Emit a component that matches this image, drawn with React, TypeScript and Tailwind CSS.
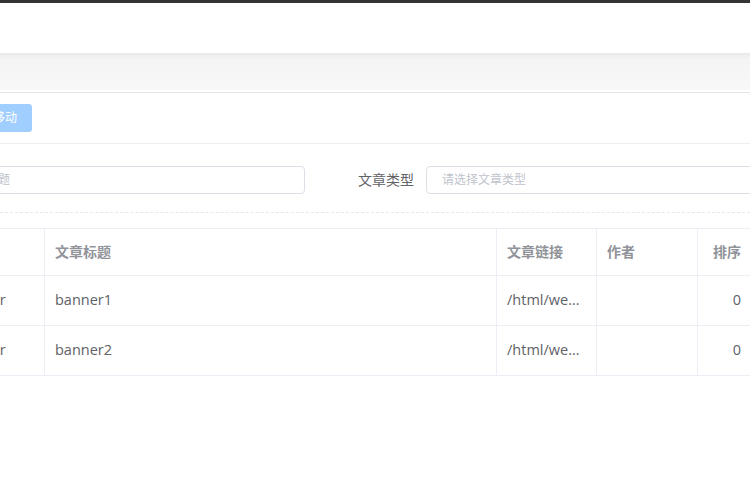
const font = { fontFamily: '"Open Sans", "Noto Sans CJK SC", sans-serif' };

const columns = [
  { label: '类型', align: 'left' },
  { label: '文章标题', align: 'left' },
  { label: '文章链接', align: 'left' },
  { label: '作者', align: 'left' },
  { label: '排序', align: 'right' },
];

const rows = [
  ['banner', 'banner1', '/html/webpage/banner1.html', '', '0'],
  ['banner', 'banner2', '/html/webpage/banner2.html', '', '0'],
];

export default function App() {
  return (
    <div className="w-[750px] h-[500px] overflow-hidden bg-white text-[#606266]" style={font}>
      {/* top bar + header */}
      <div className="h-[3px] bg-[#353535]" />
      <div className="h-[50px] bg-white" />
      <div className="h-[37px] bg-[linear-gradient(#e9e9e9,#f4f4f4_6px,#f8f8f8)]" />
      <div className="h-[2px] bg-white" />
      <div className="h-px bg-[#e3e3e3]" />

      {/* toolbar */}
      <div className="h-[51px] pt-[11px] border-b border-[#eeeeee]">
        <button className="-ml-[22px] h-[28px] px-[15px] rounded-[3px] bg-[#a0cfff] text-white text-xs leading-none">
          移动
        </button>
      </div>

      {/* search form */}
      <div className="pt-[22px] pb-[18px] border-b border-dashed border-[#e4e7ed] flex items-center whitespace-nowrap">
        <div className="-ml-[90px] w-[395px] h-[28px] shrink-0 border border-[#dcdfe6] rounded-[4px] pl-[15px] flex items-center text-xs text-[#c0c4cc]">
          请输入文章标题
        </div>
        <span className="ml-[53px] mr-[12px] text-sm text-[#606266] shrink-0">文章类型</span>
        <div className="w-[395px] h-[28px] shrink-0 border border-[#dcdfe6] rounded-[4px] pl-[15px] flex items-center text-xs text-[#c0c4cc]">
          请选择文章类型
        </div>
      </div>

      {/* table */}
      <div className="mt-[15px] -ml-[53px] w-[805px] border-t border-[#ebeef5] text-sm">
        <div className="grid grid-cols-[98px_452px_100px_101px_54px] h-[47px]">
          {columns.map(c => (
            <div
              key={c.label}
              className={`border-r border-b border-[#ebeef5] px-[10px] flex items-center font-bold text-[#909399] ${c.align === 'right' ? 'justify-end' : ''}`}
            >
              {c.label}
            </div>
          ))}
        </div>
        {rows.map((r, i) => (
          <div key={i} className="grid grid-cols-[98px_452px_100px_101px_54px] h-[50px] text-[14.5px]">
            {r.map((cell, j) => (
              <div
                key={j}
                className={`border-r border-b border-[#ebeef5] px-[10px] flex items-center min-w-0 ${j === 4 ? 'justify-end' : ''}`}
              >
                <span className="block overflow-hidden text-ellipsis whitespace-nowrap">{cell}</span>
              </div>
            ))}
          </div>
        ))}
      </div>
    </div>
  );
}
